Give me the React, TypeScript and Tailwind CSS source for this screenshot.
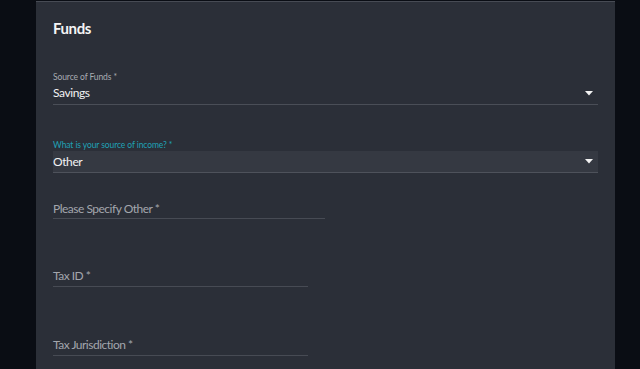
import React from "react";

const Arrow = () => (
  <svg width="8" height="5" viewBox="0 0 8 5" className="shrink-0">
    <path d="M0 0 L8 0 L4 4.5 Z" fill="#f2f2f2" />
  </svg>
);

export default function App() {
  return (
    <div
      className="w-[640px] h-[369px] overflow-hidden bg-[#0a0d14]"
      style={{ fontFamily: "Lato, 'Open Sans', sans-serif" }}
    >
      <div className="ml-[36px] w-[579px] h-[369px] bg-[#2b2f38] border-t border-[#474b54] mt-[1px]">
        <div className="px-[17px]">
          <div className="mt-[16px] h-[20px] leading-[20px] text-[15px] font-bold tracking-[-0.4px] text-[#f4f4f5]">
            Funds
          </div>

          {/* Source of Funds */}
          <div className="mt-[34px]">
            <div className="h-[10px] leading-[10px] text-[8.5px] tracking-[-0.1px] text-[#a8abb2]">
              Source of Funds *
            </div>
            <div className="mt-[3px] flex items-center justify-between pr-[5px] pb-[3px] border-b border-[#4a4e57]">
              <span className="h-[16px] leading-[16px] text-[12px] tracking-[-0.4px] text-[#f2f2f3]">Savings</span>
              <Arrow />
            </div>
          </div>

          {/* Source of income */}
          <div className="mt-[35px]">
            <div className="h-[10px] leading-[10px] text-[8.5px] tracking-[-0.1px] text-[#1fa2b6]">
              What is your source of income? *
            </div>
            <div className="mt-[1px] h-[22px] flex items-center justify-between pr-[5px] bg-[#353942] border-b border-[#4e525b]">
              <span className="leading-[16px] text-[12px] tracking-[-0.4px] text-[#f2f2f3]">Other</span>
              <Arrow />
            </div>
          </div>

          {/* Please Specify Other */}
          <div className="mt-[26px] w-[272px] pt-[2px] pb-[1px] border-b border-[#474b54]">
            <div className="h-[16px] leading-[16px] text-[12px] tracking-[-0.5px] text-[#a3a6ad]">
              Please Specify Other *
            </div>
          </div>

          {/* Tax ID */}
          <div className="mt-[47px] w-[255px] pt-[2px] pb-[2px] border-b border-[#474b54]">
            <div className="h-[16px] leading-[16px] text-[12px] tracking-[-0.5px] text-[#a3a6ad]">Tax ID *</div>
          </div>

          {/* Tax Jurisdiction */}
          <div className="mt-[48px] w-[255px] pt-[2px] pb-[2px] border-b border-[#474b54]">
            <div className="h-[16px] leading-[16px] text-[12px] tracking-[-0.5px] text-[#a3a6ad]">
              Tax Jurisdiction *
            </div>
          </div>
        </div>
      </div>
    </div>
  );
}
